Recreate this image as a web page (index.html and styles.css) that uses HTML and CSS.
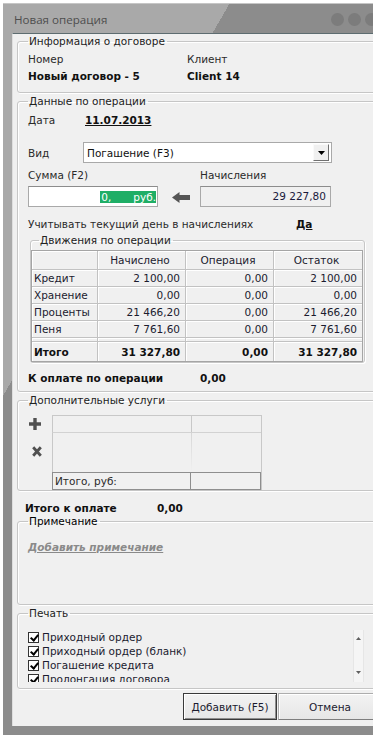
FILE: index.html
```html
<!DOCTYPE html>
<html lang="ru">
<head>
    <meta charset="UTF-8">
    <title>Новая операция</title>
    <link rel="stylesheet" href="styles.css">
</head>
<body>
<div class="window">
    <div class="titlebar">
        <span class="title">Новая операция</span>
        <div class="caption"><i></i><i></i><i></i></div>
    </div>
    <div class="client">
        <fieldset class="group g-info">
            <legend>Информация о договоре</legend>
            <div class="info">
                <span>Номер</span><span>Клиент</span>
                <b>Новый договор - 5</b><b>Client 14</b>
            </div>
        </fieldset>

        <fieldset class="group g-oper">
            <legend>Данные по операции</legend>
            <div class="date-row"><span>Дата</span><b class="u">11.07.2013</b></div>
            <div class="kind-row">
                <span>Вид</span>
                <div class="combo">
                    <span>Погашение (F3)</span>
                    <i class="drop"><svg width="7" height="4" viewBox="0 0 7 4"><path d="M0 0h7L3.5 4z" fill="#000"/></svg></i>
                </div>
            </div>
            <div class="sum-labels"><span>Сумма (F2)</span><span>Начисления</span></div>
            <div class="sum-row">
                <div class="edit"><span class="sel"><span class="num">0,</span>руб.</span></div>
                <svg class="arrow" width="18" height="11" viewBox="0 0 18 11"><path d="M0 5.5L7.5 0v3H18v5H7.5v3z" fill="#555"/></svg>
                <div class="readonly">29 227,80</div>
            </div>
            <div class="today"><span>Учитывать текущий день в начислениях</span><b class="u">Да</b></div>

            <fieldset class="group g-moves">
                <legend>Движения по операции</legend>
                <table class="moves">
                    <colgroup><col style="width:66px"><col style="width:88px"><col style="width:88px"><col></colgroup>
                    <tr class="head"><th></th><th>Начислено</th><th>Операция</th><th>Остаток</th></tr>
                    <tr><td>Кредит</td><td>2 100,00</td><td>0,00</td><td>2 100,00</td></tr>
                    <tr><td>Хранение</td><td>0,00</td><td>0,00</td><td>0,00</td></tr>
                    <tr><td>Проценты</td><td>21 466,20</td><td>0,00</td><td>21 466,20</td></tr>
                    <tr><td>Пеня</td><td>7 761,60</td><td>0,00</td><td>7 761,60</td></tr>
                    <tr class="gap"><td></td><td></td><td></td><td></td></tr>
                    <tr class="total"><td>Итого</td><td>31 327,80</td><td>0,00</td><td>31 327,80</td></tr>
                </table>
            </fieldset>

            <div class="pay"><b>К оплате по операции</b><b>0,00</b></div>
        </fieldset>

        <fieldset class="group g-svc">
            <legend>Дополнительные услуги</legend>
            <div class="svc">
                <div class="tools">
                    <svg class="plus" width="12" height="12" viewBox="0 0 12 12"><path d="M4.3 0h3.4v4.3H12v3.4H7.7V12H4.3V7.7H0V4.3h4.3z" fill="#505050"/></svg>
                    <svg class="cross" width="10" height="11" viewBox="0 0 10 11"><path d="M1.2 1.2l7.6 8.6M8.8 1.2L1.2 9.8" stroke="#505050" stroke-width="2.8"/></svg>
                </div>
                <div class="svc-grid">
                    <div class="svc-head"><span></span><span></span></div>
                    <div class="svc-body"><span></span><span></span></div>
                    <div class="svc-foot"><span>Итого, руб:</span><span></span></div>
                </div>
            </div>
        </fieldset>

        <div class="grand"><b>Итого к оплате</b><b>0,00</b></div>

        <fieldset class="group g-note">
            <legend>Примечание</legend>
            <a class="add-note">Добавить примечание</a>
        </fieldset>

        <fieldset class="group g-print">
            <legend>Печать</legend>
            <div class="list">
                <ul>
                    <li><i class="cb"></i>Приходный ордер</li>
                    <li><i class="cb"></i>Приходный ордер (бланк)</li>
                    <li><i class="cb"></i>Погашение кредита</li>
                    <li><i class="cb"></i>Пролонгация договора</li>
                </ul>
                <div class="scroll">
                    <svg width="5" height="3" viewBox="0 0 5 3"><path d="M0 3h5L2.5 0z" fill="#606060"/></svg>
                    <svg width="5" height="3" viewBox="0 0 5 3"><path d="M0 0h5L2.5 3z" fill="#606060"/></svg>
                </div>
            </div>
        </fieldset>

        <div class="buttons">
            <button class="btn default">Добавить (F5)</button>
            <button class="btn">Отмена</button>
        </div>
    </div>
</div>
</body>
</html>
```

FILE: styles.css
```css
*{
    box-sizing: border-box;
}
body{
    margin: 0;
    width: 373px;
    height: 739px;
    overflow: hidden;
    background: #fff;
    font-family: "DejaVu Sans", sans-serif;
    font-size: 10.5px;
    color: #2a2a2a;
}
b{
    color: #111;
}
.u{
    text-decoration: underline;
}

/* window frame, cut off by the right edge of the shot */
.window{
    margin: 3px 0 0 3px;
    width: 370px;
    overflow: hidden;
    padding: 0 0 9px 9px;
    border-top: 1px solid #c6c6c6;
    background: linear-gradient(120deg, #a9a9a9 196px, #8c8c8c 196px);
}
.titlebar{
    height: 29px;
    display: flex;
    align-items: center;
    padding: 2px 0 0 2px;
}
.title{
    font-family: "Open Sans", sans-serif;
    font-size: 11.6px;
    color: #4e4e4e;
}
.caption{
    margin-left: auto;
    margin-right: -5px;
    display: flex;
    gap: 4px;
}
.caption i{
    width: 13px;
    height: 13px;
    border-radius: 50%;
    background: #7c7c7c;
}
.client{
    background: #f0f0f0;
    border-top: 1px solid #5d6c70;
    border-left: 1px solid #dedede;
    padding: 1px 0 6px 4px;
}

/* group boxes */
.group{
    margin: 0 -12px 0 0;
    padding: 0 0 0 10px;
    min-width: 0;
    border: 1px solid #c6c6c6;
    border-radius: 3px;
    box-shadow: inset 1px 1px #fff, 1px 1px #fff;
}
.group legend{
    padding: 0 2px 0 1px;
    line-height: 12px;
    color: #222;
}
.g-info{
    padding-bottom: 9px;
}
.info{
    display: grid;
    grid-template-columns: 159px auto;
    row-gap: 3px;
    padding-top: 5px;
    line-height: 14px;
}
.g-oper{
    margin-top: 2px;
    padding-bottom: 6px;
}
.date-row{
    display: grid;
    grid-template-columns: 57px auto;
    margin-top: 6px;
    line-height: 14px;
}
.kind-row{
    display: flex;
    align-items: center;
    margin-top: 15px;
}
.kind-row > span{
    width: 55px;
}
.combo{
    width: 249px;
    height: 21px;
    display: flex;
    align-items: center;
    justify-content: space-between;
    padding: 0 2px 0 3px;
    background: #fff;
    border: 1px solid #a9a9a9;
    color: #111;
}
.drop{
    width: 16px;
    height: 17px;
    display: flex;
    align-items: center;
    justify-content: center;
    background: #f0f0f0;
    border: 1px solid;
    border-color: #fafafa #707070 #707070 #fafafa;
}
.sum-labels{
    display: grid;
    grid-template-columns: 172px auto;
    margin-top: 5px;
    line-height: 14px;
}
.sum-row{
    display: flex;
    align-items: center;
    margin-top: 4px;
}
.edit{
    width: 130px;
    height: 21px;
    display: flex;
    align-items: center;
    justify-content: flex-end;
    padding-right: 1px;
    background: #fff;
    border: 1px solid #a9a9a9;
    border-top-color: #8c8c8c;
}
.sel{
    background: #1fae66;
    color: #fff;
    line-height: 12px;
    padding-left: 1px;
}
.sel .num{
    margin-right: 22px;
}
.arrow{
    margin: 2px 10px 0 14px;
}
.readonly{
    width: 131px;
    height: 21px;
    line-height: 19px;
    text-align: right;
    padding-right: 4px;
    border: 1px solid #a9a9a9;
    border-top-color: #8c8c8c;
    color: #1a1a3c;
}
.today{
    display: grid;
    grid-template-columns: 268px auto;
    margin-top: 10px;
    line-height: 14px;
}

/* movements table */
.g-moves{
    margin: 3px 0 0 2px;
    width: 335px;
    padding: 4px 0 0 0;
}
.g-moves legend{
    margin-left: 8px;
}
.moves{
    width: 332px;
    table-layout: fixed;
    border-collapse: separate;
    border-spacing: 0;
    border: 1px solid #a5a5a5;
    color: #1b1b2f;
}
.moves th,
.moves td{
    height: 17px;
    padding: 0 5px 0 2px;
    border-right: 1px solid #c2c2c2;
    border-bottom: 1px solid #c2c2c2;
    box-shadow: inset 1px 1px #fff;
    text-align: right;
    white-space: nowrap;
    font-weight: normal;
}
.moves th{
    height: 19px;
    text-align: center;
}
.moves td:first-child{
    text-align: left;
}
.moves th:last-child,
.moves td:last-child{
    border-right: none;
}
.moves .gap td{
    height: 4px;
}
.moves .total td{
    height: 19px;
    border-bottom: none;
    font-weight: bold;
    color: #111;
}
.pay{
    display: grid;
    grid-template-columns: 172px auto;
    margin-top: 8px;
    line-height: 14px;
}

/* services */
.g-svc{
    margin-top: 2px;
}
.svc{
    display: flex;
    margin-top: 9px;
}
.tools{
    width: 24px;
    display: flex;
    flex-direction: column;
}
.plus{
    margin: 3px 0 0 1px;
}
.cross{
    margin: 16px 0 0 4px;
}
.svc-grid{
    width: 210px;
    height: 75px;
    display: flex;
    flex-direction: column;
    border-right: 1px solid #c8c8c8;
}
.svc-grid > div{
    display: grid;
    grid-template-columns: 139px 70px;
}
.svc-head{
    height: 18px;
    border-top: 1px solid #c8c8c8;
    border-left: 1px solid #c8c8c8;
    border-bottom: 1px solid #d2d2d2;
}
.svc-head span{
    border-right: 1px solid #c8c8c8;
}
.svc-body{
    flex: 1;
    border-left: 1px solid #c8c8c8;
}
.svc-body span:first-child{
    background: linear-gradient(#d6d6d6, #f0f0f0) right / 1px 100% no-repeat;
}
.svc-foot{
    height: 18px;
}
.svc-foot span{
    border: 1px solid #8e8e8e;
    line-height: 16px;
    padding-left: 2px;
}
.svc-foot span + span{
    border-left: none;
}
.grand{
    display: grid;
    grid-template-columns: 132px auto;
    margin: 10px 0 0 8px;
    line-height: 14px;
}

/* note */
.g-note{
    padding-bottom: 50px;
}
.g-note legend{
    color: #000;
}
.add-note{
    display: block;
    margin-top: 13px;
    line-height: 14px;
    font-weight: bold;
    font-style: italic;
    text-decoration: underline;
    color: #8a8a8a;
}

/* print list */
.g-print{
    margin-top: 2px;
    padding-bottom: 6px;
}
.list{
    width: 336px;
    height: 52px;
    margin-top: 11px;
    display: flex;
    overflow: hidden;
}
.list ul{
    flex: 1;
    margin: 0;
    padding: 0;
    list-style: none;
    color: #1b1b2f;
}
.list li{
    display: flex;
    align-items: center;
    height: 14px;
    white-space: nowrap;
}
.cb{
    position: relative;
    width: 11px;
    height: 11px;
    margin-right: 3px;
    background: #fff;
    border: 1px solid #333;
}
.cb::after{
    content: "";
    position: absolute;
    left: 3px;
    top: 0;
    width: 3px;
    height: 6px;
    border: solid #000;
    border-width: 0 2px 2px 0;
    transform: rotate(40deg);
}
.scroll{
    width: 11px;
    display: flex;
    flex-direction: column;
    justify-content: space-between;
    align-items: center;
    padding: 7px 0 8px;
    background: #f5f5f5;
    border-left: 1px solid #e6e6e6;
    border-right: 1px solid #e6e6e6;
}

/* buttons */
.buttons{
    display: flex;
    justify-content: flex-end;
    gap: 1px;
    margin: 4px -9px 0 0;
}
.btn{
    height: 27px;
    width: 104px;
    font-family: inherit;
    font-size: inherit;
    color: #1b1b2f;
    background: linear-gradient(#f3f3f3, #e6e6e6);
    border: 1px solid #adadad;
    border-bottom-color: #7e7e7e;
    box-shadow: inset 1px 1px #fff;
    padding: 0;
}
.btn.default{
    width: 94px;
    border-color: #3a3a3a;
    box-shadow: inset 1px 1px #fff, inset -1px -1px #8e8e8e;
}
```
